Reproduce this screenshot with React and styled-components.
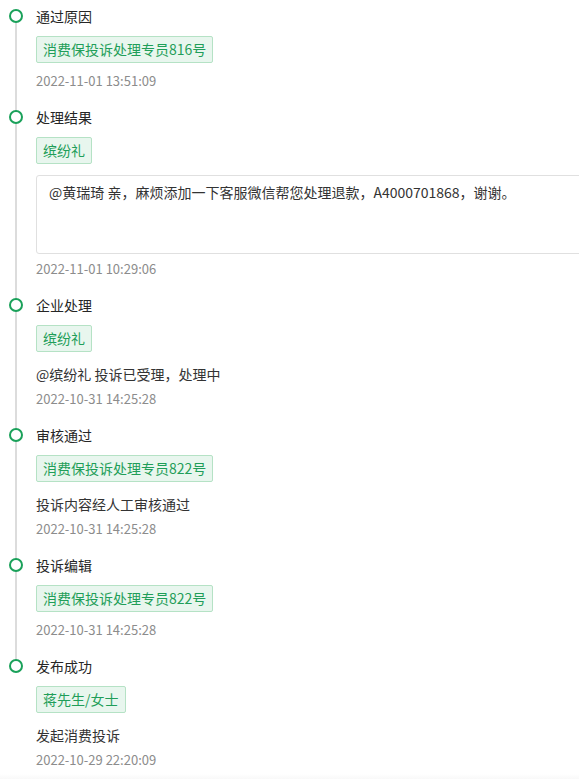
import React from 'react';
import styled, { createGlobalStyle } from 'styled-components';

const GlobalStyle = createGlobalStyle`
  html, body {
    margin: 0;
    padding: 0;
    background: #fff;
    overflow: hidden;
  }
  body {
    font-family: "Noto Sans CJK SC", "Noto Sans", sans-serif;
    color: #333;
  }
`;

const Page = styled.div`
  width: 100%;
  padding-top: 6px;
  overflow: hidden;
`;

const Timeline = styled.ul`
  list-style: none;
  margin: 0;
  padding: 0;
`;

const Item = styled.li`
  position: relative;
  padding-left: 36px;
  padding-bottom: ${p => (p.last ? '0' : '16px')};

  &::before {
    content: '';
    display: ${p => (p.last ? 'none' : 'block')};
    position: absolute;
    left: 15px;
    top: 10px;
    bottom: -10px;
    width: 2px;
    background: #dcdcdc;
  }
`;

const Dot = styled.span`
  position: absolute;
  left: 9px;
  top: 3px;
  width: 14px;
  height: 14px;
  box-sizing: border-box;
  border: 2.5px solid #1aa15a;
  border-radius: 50%;
  background: #fff;
  z-index: 1;
`;

const Title = styled.div`
  font-size: 14px;
  line-height: 20px;
  color: #262626;
`;

const TagRow = styled.div`
  display: flex;
  margin-top: 10px;
`;

const Tag = styled.span`
  display: block;
  padding: 2px 6px;
  font-size: 14px;
  line-height: 21px;
  color: #1f9e59;
  background: #e8f6ee;
  border: 1px solid #b5e2c5;
  border-radius: 2px;
`;

const Text = styled.div`
  margin-top: 12px;
  font-size: 14px;
  line-height: 20px;
  color: #333;
`;

const Reply = styled.div`
  margin-top: 11px;
  width: 560px;
  height: 79px;
  box-sizing: border-box;
  padding: 6px 12px;
  border: 1px solid #e0e0e0;
  border-radius: 3px;
  font-size: 14px;
  line-height: 20px;
  color: #333;
`;

const Time = styled.div`
  margin-top: ${p => p.gap}px;
  font-size: 13px;
  line-height: 20px;
  color: #8c8c8c;
`;

const Shade = styled.div`
  height: 10px;
  margin-top: 4px;
  background: linear-gradient(#fff, #f2f2f2);
`;

const records = [
  { title: '通过原因', tag: '消费保投诉处理专员816号', time: '2022-11-01 13:51:09' },
  {
    title: '处理结果',
    tag: '缤纷礼',
    reply: '@黄瑞琦 亲，麻烦添加一下客服微信帮您处理退款，A4000701868，谢谢。',
    time: '2022-11-01 10:29:06',
  },
  { title: '企业处理', tag: '缤纷礼', text: '@缤纷礼 投诉已受理，处理中', time: '2022-10-31 14:25:28' },
  { title: '审核通过', tag: '消费保投诉处理专员822号', text: '投诉内容经人工审核通过', time: '2022-10-31 14:25:28' },
  { title: '投诉编辑', tag: '消费保投诉处理专员822号', time: '2022-10-31 14:25:28' },
  { title: '发布成功', tag: '蒋先生/女士', text: '发起消费投诉', time: '2022-10-29 22:20:09' },
];

export default function App() {
  return (
    <Page>
      <GlobalStyle />
      <Timeline>
        {records.map((r, i) => (
          <Item key={i} last={i === records.length - 1}>
            <Dot />
            <Title>{r.title}</Title>
            <TagRow>
              <Tag>{r.tag}</Tag>
            </TagRow>
            {r.reply && <Reply>{r.reply}</Reply>}
            {r.text && <Text>{r.text}</Text>}
            <Time gap={r.reply || r.text ? 5 : 8}>{r.time}</Time>
          </Item>
        ))}
      </Timeline>
      <Shade />
    </Page>
  );
}
